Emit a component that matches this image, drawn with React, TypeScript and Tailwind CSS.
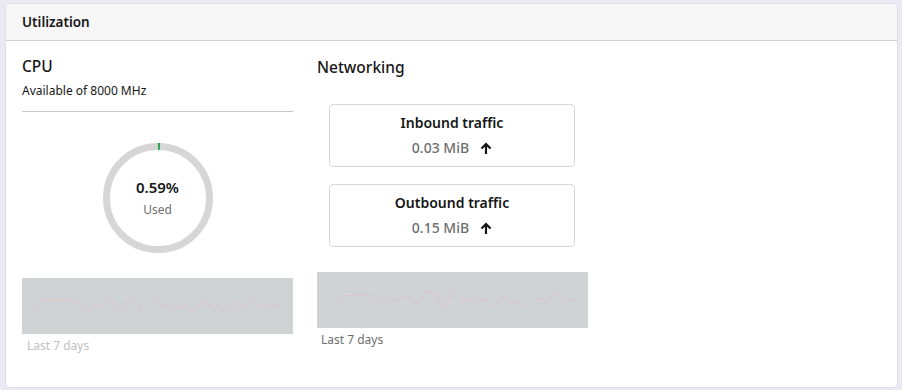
import React from "react";

const cpuPts: [number, number][] = [
  [13, 34], [21, 22], [51, 22], [65, 30], [76, 27], [88, 22], [98, 34], [108, 20], [113, 20], [121, 32], [131, 20], [140, 27], [155, 30], [165, 27], [171, 35], [181, 22], [190, 30], [198, 29], [206, 35], [215, 24], [221, 29], [231, 22], [241, 29], [258, 27],
];
const netPts: [number, number][] = [
  [12, 36], [26, 24], [52, 23], [64, 30], [78, 28], [90, 22], [100, 33], [110, 19], [118, 21], [126, 36], [136, 20], [146, 28], [160, 30], [170, 27], [178, 34], [186, 24], [196, 31], [204, 30], [212, 36], [222, 26], [230, 30], [240, 20], [250, 27], [260, 28],
];

function Spark({ pts }: { pts: [number, number][] }) {
  return (
    <div className="w-[271px] h-[56px] bg-[#d0d3d3]">
      <svg width="271" height="56" viewBox="0 0 271 56">
        <polyline
          points={pts.map((p) => p.join(",")).join(" ")}
          fill="none"
          stroke="#dcc4c8"
          strokeWidth="1"
        />
      </svg>
    </div>
  );
}

function Arrow() {
  return (
    <svg width="12" height="13" viewBox="0 0 12 13" className="text-[#161616]">
      <path d="M6 12V2M1.5 6.5L6 2l4.5 4.5" fill="none" stroke="currentColor" strokeWidth="2.2" />
    </svg>
  );
}

function Traffic({ title, value }: { title: string; value: string }) {
  return (
    <div className="w-[246px] h-[63px] border border-[#d4d4d4] rounded-[4px] flex flex-col items-center pt-[8px]">
      <div className="text-[14px] font-semibold leading-[20px] text-[#161616]">{title}</div>
      <div className="flex items-center gap-[11px] mt-[5px] leading-[20px]">
        <span className="text-[14px] font-medium text-[#6f6f6f]">{value}</span>
        <Arrow />
      </div>
    </div>
  );
}

export default function App() {
  const r = 51.5;
  const c = 2 * Math.PI * r;
  return (
    <div
      className="w-[902px] h-[390px] bg-[#ebeaf4] pt-[3px] pl-[5px] pr-[4px] pb-[2px]"
      style={{ fontFamily: '"Noto Sans", "Open Sans", sans-serif' }}
    >
      <div className="w-full h-full bg-white rounded-[5px] border border-[#dedee6] overflow-hidden flex flex-col">
        <div className="h-[37px] bg-[#f7f7f7] border-b border-[#cfcfcf] px-[16px] flex items-center pt-[1px] text-[13.5px] font-semibold text-[#161616]">
          Utilization
        </div>
        <div className="flex px-[16px] gap-[24px]">
          <div className="w-[271px] flex flex-col pt-[15px]">
            <div className="text-[15.5px] leading-[20px] font-medium text-[#161616]">CPU</div>
            <div className="text-[12px] leading-[16px] mt-[7px] text-[#161616]">Available of 8000 MHz</div>
            <div className="mt-[12px] border-t border-[#c6c6c6]" />
            <div className="mt-[31px] self-center relative w-[110px] h-[110px]">
              <svg width="110" height="110" viewBox="0 0 110 110" className="absolute inset-0">
                <circle cx="55" cy="55" r={r} fill="none" stroke="#d6d6d6" strokeWidth="7" />
                <circle
                  cx="55"
                  cy="55"
                  r={r}
                  fill="none"
                  stroke="#24a148"
                  strokeWidth="7"
                  strokeDasharray={`${c * 0.0059} ${c}`}
                  transform="rotate(-90 55 55)"
                />
              </svg>
              <div className="absolute inset-0 flex flex-col items-center justify-center">
                <div className="text-[15px] leading-[20px] font-semibold text-[#161616] mt-[-1px]">0.59%</div>
                <div className="text-[12px] leading-[16px] text-[#6f6f6f] mt-[5px]">Used</div>
              </div>
            </div>
            <div className="mt-[25px]">
              <Spark pts={cpuPts} />
            </div>
            <div className="text-[12px] leading-[16px] mt-[4px] pl-[5px] text-[#c0c0c0]">Last 7 days</div>
          </div>
          <div className="w-[271px] flex flex-col pt-[16px]">
            <div className="text-[15.5px] leading-[20px] font-medium text-[#161616]">Networking</div>
            <div className="ml-[12px] mt-[27px] flex flex-col gap-[17px]">
              <Traffic title="Inbound traffic" value="0.03 MiB" />
              <Traffic title="Outbound traffic" value="0.15 MiB" />
            </div>
            <div className="mt-[25px]">
              <Spark pts={netPts} />
            </div>
            <div className="text-[12px] leading-[16px] mt-[4px] pl-[4px] text-[#6f6f6f]">Last 7 days</div>
          </div>
        </div>
      </div>
    </div>
  );
}
